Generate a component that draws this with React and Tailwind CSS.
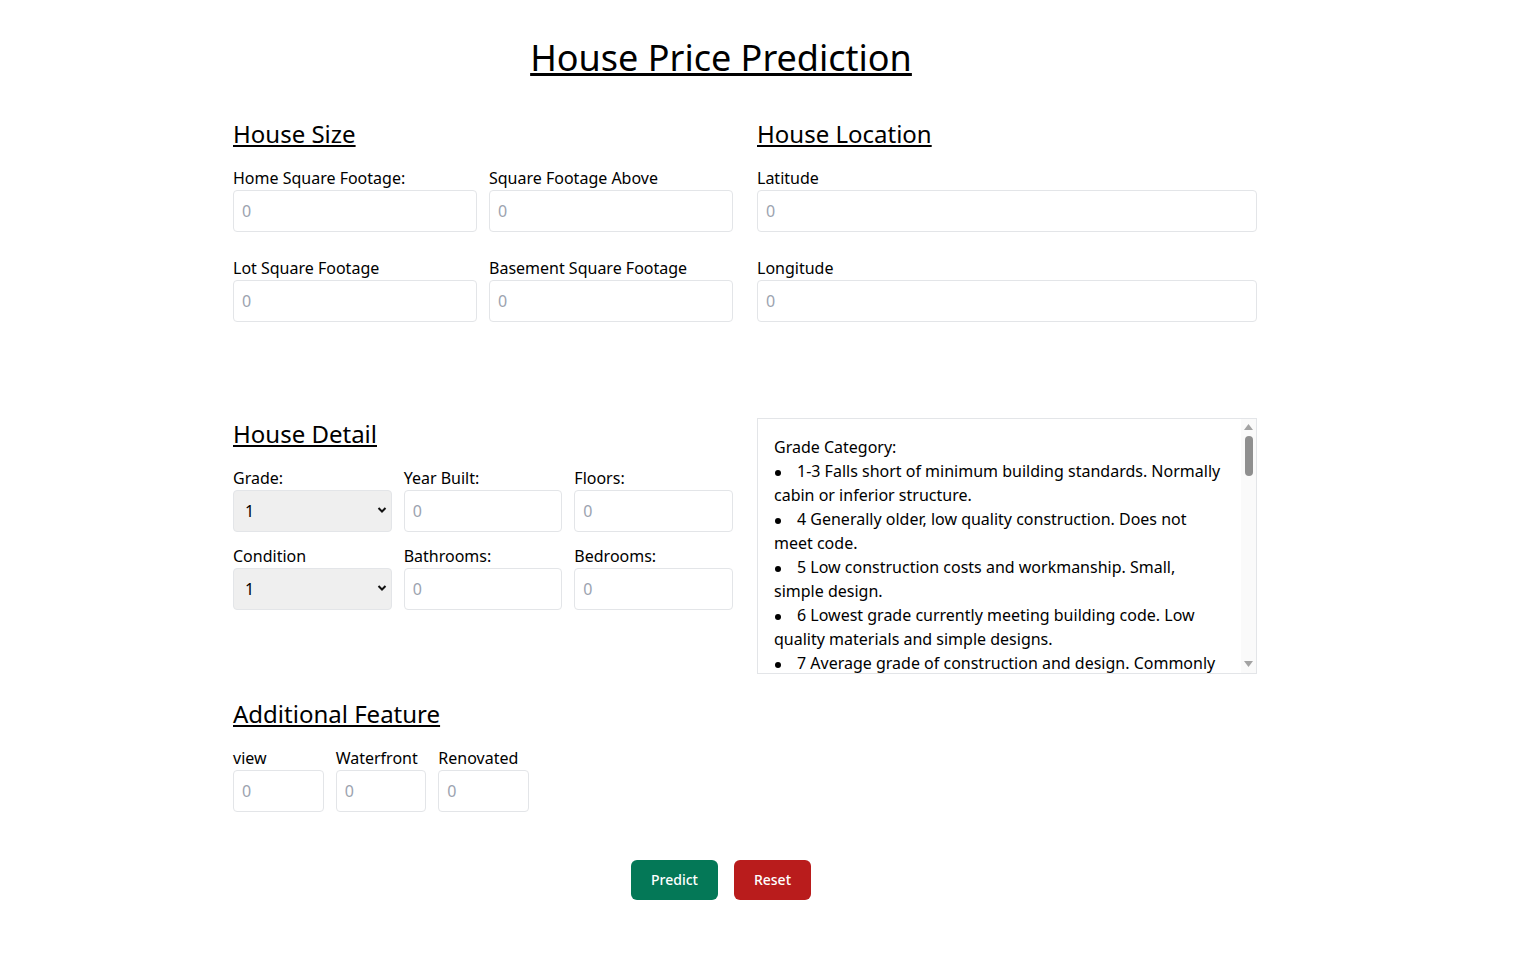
import React, { useState } from 'react';

const font = { fontFamily: '"Noto Sans", "Open Sans", sans-serif' };

const grades = [
  '1-3 Falls short of minimum building standards. Normally cabin or inferior structure.',
  '4 Generally older, low quality construction. Does not meet code.',
  '5 Low construction costs and workmanship. Small, simple design.',
  '6 Lowest grade currently meeting building code. Low quality materials and simple designs.',
  '7 Average grade of construction and design. Commonly seen in plats and older sub-divisions.',
  '8 Just above average in construction and design. Usually better materials in both the exterior and interior finish work.',
  '9 Better architectural design with extra interior and exterior design and quality.',
  '10 Homes of this quality generally have high quality features. Finish work is better and more design quality is seen in the floor plans. Generally have a larger square footage.',
  '11 Custom design and higher quality finish work with added amenities of solid woods, bathroom fixtures and more luxurious options.',
  '12 Custom design and excellent builders. All materials are of the highest quality and all conveniences are present.',
  '13 Generally custom designed and built. Mansion level. Large amount of highest quality cabinet work, wood trim, marble, entry ways etc.',
];

const conditions = [
  '1 Poor- Worn out. Repair and overhaul needed on painted surfaces, roofing, plumbing, heating and numerous functional inadequacies. Excessive deferred maintenance and abandonment.',
  '2 Fair- Badly worn. Much repair needed. Many items need refinishing or overhauling, deferred maintenance obvious, inadequate building utility and systems all shortening the life expectancy and increasing the effective age.',
  '3 Average- Some evidence of deferred maintenance and normal obsolescence with age in that a few minor repairs are needed, along with some refinishing. All major components still functional and contributing toward an extended life expectancy.',
  '4 Good- No obvious maintenance required but neither is everything new. Appearance and utility are above the average for its location and usage.',
  '5 Very Good- All items well maintained, many having been overhauled and repaired as they have shown signs of wear, increasing the life expectancy and lowering the effective age.',
];

function Field({ label, value, onChange }) {
  return (
    <div className="flex flex-col">
      <label className="text-base leading-6 text-black">{label}</label>
      <input
        type="number"
        placeholder="0"
        value={value}
        onChange={e => onChange(e.target.value)}
        className="h-[42px] w-full rounded border border-[#e3e5e8] bg-white px-2 text-base text-black outline-none placeholder:text-[#9ca3af]"
      />
    </div>
  );
}

function SelectField({ label, value, onChange }) {
  return (
    <div className="flex flex-col">
      <label className="text-base leading-6 text-black">{label}</label>
      <div className="relative">
        <select
          value={value}
          onChange={e => onChange(e.target.value)}
          className="h-[42px] w-full appearance-none rounded border border-[#e3e5e8] bg-[#efefef] pl-[11px] text-base text-black outline-none"
        >
          {Array.from({ length: 13 }, (_, i) => <option key={i + 1}>{i + 1}</option>)}
        </select>
        <svg className="pointer-events-none absolute right-[5px] top-[16px]" width="10" height="8" viewBox="0 0 10 8">
          <path d="M1.5 2 L5 5.5 L8.5 2" fill="none" stroke="#111" strokeWidth="2" />
        </svg>
      </div>
    </div>
  );
}

function Heading({ children }) {
  return <h2 className="text-2xl leading-8 text-black underline">{children}</h2>;
}

function Bullet() {
  return (
    <span className="inline-block w-[23px]">
      <span className="ml-[1px] inline-block h-[6px] w-[6px] rounded-full bg-black align-middle"></span>
    </span>
  );
}

export default function App() {
  const empty = { sqft: '', above: '', lot: '', basement: '', lat: '', long: '', grade: '1', year: '', floors: '', condition: '1', baths: '', beds: '', view: '', water: '', reno: '' };
  const [form, setForm] = useState(empty);
  const set = key => v => setForm({ ...form, [key]: v });

  return (
    <div className="min-h-screen bg-white pl-[233px] pt-[38px] pb-10 text-black" style={font}>
      <div className="w-[976px] text-center">
        <h1 className="text-4xl leading-10 underline">House Price Prediction</h1>
      </div>

      <div className="mt-10 grid w-[1024px] grid-cols-2 gap-6">
        <div>
          <Heading>House Size</Heading>
          <div className="mt-4 grid grid-cols-2 gap-x-3 gap-y-6">
            <Field label="Home Square Footage:" value={form.sqft} onChange={set('sqft')} />
            <Field label="Square Footage Above" value={form.above} onChange={set('above')} />
            <Field label="Lot Square Footage" value={form.lot} onChange={set('lot')} />
            <Field label="Basement Square Footage" value={form.basement} onChange={set('basement')} />
          </div>
        </div>
        <div>
          <Heading>House Location</Heading>
          <div className="mt-4 grid grid-cols-1 gap-y-6">
            <Field label="Latitude" value={form.lat} onChange={set('lat')} />
            <Field label="Longitude" value={form.long} onChange={set('long')} />
          </div>
        </div>
      </div>

      <div className="mt-[96px] grid w-[1024px] grid-cols-2 gap-6">
        <div>
          <Heading>House Detail</Heading>
          <div className="mt-4 grid grid-cols-3 gap-x-3 gap-y-3">
            <SelectField label="Grade:" value={form.grade} onChange={set('grade')} />
            <Field label="Year Built:" value={form.year} onChange={set('year')} />
            <Field label="Floors:" value={form.floors} onChange={set('floors')} />
            <SelectField label="Condition" value={form.condition} onChange={set('condition')} />
            <Field label="Bathrooms:" value={form.baths} onChange={set('baths')} />
            <Field label="Bedrooms:" value={form.beds} onChange={set('beds')} />
          </div>
        </div>
        <div className="relative h-[256px] border border-[#e3e5e8]">
          <div className="h-full overflow-y-auto py-4 pl-4 pr-[31px] text-base leading-6 text-black [scrollbar-width:none]">
            <p>Grade Category:</p>
            {grades.map(g => (
              <p key={g}><Bullet />{g}</p>
            ))}
            <p className="mt-6">Condition Category:</p>
            {conditions.map(c => (
              <p key={c}><Bullet />{c}</p>
            ))}
          </div>
          {/* scrollbar overlay */}
          <div className="pointer-events-none absolute right-0 top-0 flex h-full w-[15px] flex-col items-center bg-[#fafafa]">
            <svg className="mt-[5px]" width="9" height="6" viewBox="0 0 9 6"><path d="M4.5 0 L9 6 L0 6 Z" fill="#a3a3a3" /></svg>
            <div className="mt-[6px] h-[40px] w-[8px] rounded-full bg-[#8f8f8f]"></div>
            <div className="flex-1"></div>
            <svg className="mb-[6px]" width="9" height="6" viewBox="0 0 9 6"><path d="M0 0 L9 0 L4.5 6 Z" fill="#a3a3a3" /></svg>
          </div>
        </div>
      </div>

      <div className="mt-6">
        <Heading>Additional Feature</Heading>
        <div className="mt-4 grid w-[296px] grid-cols-3 gap-3">
          <Field label="view" value={form.view} onChange={set('view')} />
          <Field label="Waterfront" value={form.water} onChange={set('water')} />
          <Field label="Renovated" value={form.reno} onChange={set('reno')} />
        </div>
      </div>

      <div className="mt-12 flex w-[976px] justify-center gap-4">
        <button className="h-10 rounded-md bg-[#047857] px-5 text-sm font-medium text-white">Predict</button>
        <button onClick={() => setForm(empty)} className="h-10 rounded-md bg-[#b91c1c] px-5 text-sm font-medium text-white">Reset</button>
      </div>
    </div>
  );
}
